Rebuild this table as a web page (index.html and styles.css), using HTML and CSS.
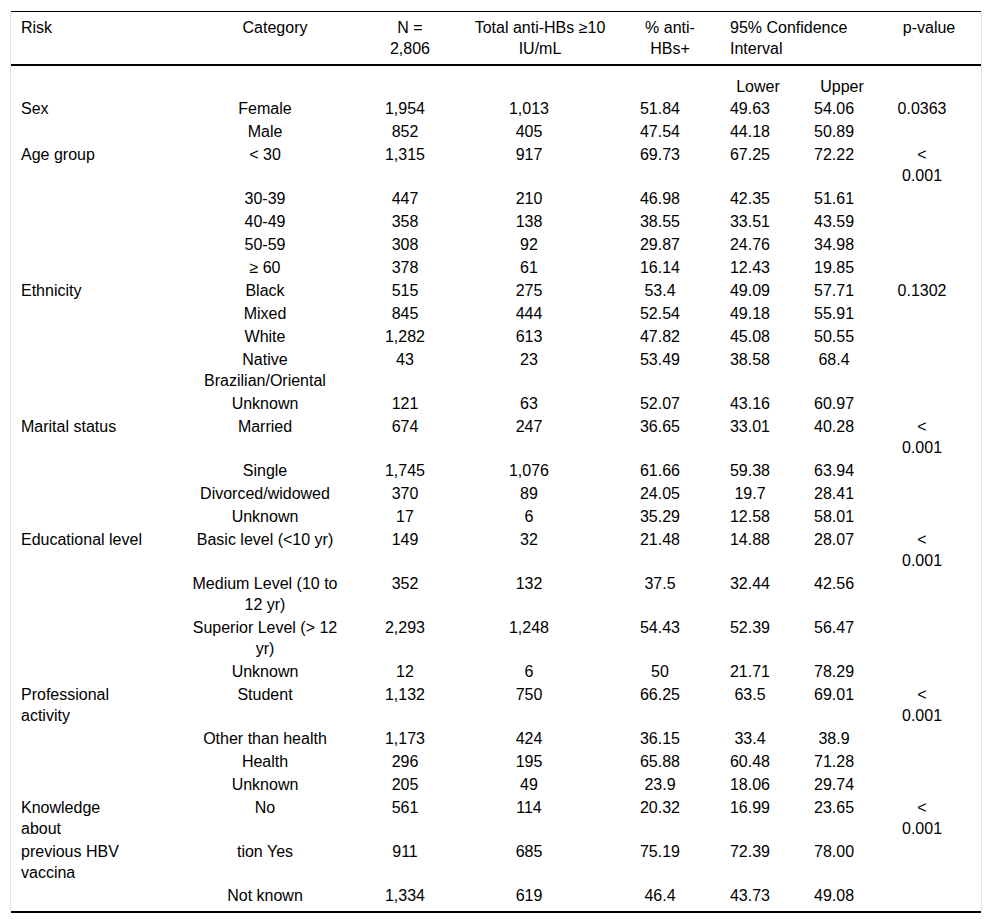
FILE: index.html
```html
<!DOCTYPE html>
<html lang="en">
<head>
<meta charset="utf-8">
<title>Anti-HBs by risk factor</title>
<link rel="stylesheet" href="styles.css">
</head>
<body>
<div class="wrap">
<table class="data">
<colgroup>
<col class="c1"><col class="c2"><col class="c3"><col class="c4"><col class="c5"><col class="c6"><col class="c7"><col class="c8">
</colgroup>
<thead>
<tr>
<th class="h-risk">Risk</th>
<th>Category</th>
<th>N =<br>2,806</th>
<th>Total anti-HBs ≥10<br>IU/mL</th>
<th>% anti-<br>HBs+</th>
<th class="h-ci" colspan="2">95% Confidence<br>Interval</th>
<th class="h-p">p-value</th>
</tr>
</thead>
<tbody>
<tr class="sub"><td></td><td></td><td></td><td></td><td></td><td>Lower</td><td>Upper</td><td></td></tr>
<tr><td>Sex</td><td>Female</td><td>1,954</td><td>1,013</td><td>51.84</td><td>49.63</td><td>54.06</td><td>0.0363</td></tr>
<tr><td></td><td>Male</td><td>852</td><td>405</td><td>47.54</td><td>44.18</td><td>50.89</td><td></td></tr>
<tr><td>Age group</td><td>&lt; 30</td><td>1,315</td><td>917</td><td>69.73</td><td>67.25</td><td>72.22</td><td>&lt;<br>0.001</td></tr>
<tr><td></td><td>30-39</td><td>447</td><td>210</td><td>46.98</td><td>42.35</td><td>51.61</td><td></td></tr>
<tr><td></td><td>40-49</td><td>358</td><td>138</td><td>38.55</td><td>33.51</td><td>43.59</td><td></td></tr>
<tr><td></td><td>50-59</td><td>308</td><td>92</td><td>29.87</td><td>24.76</td><td>34.98</td><td></td></tr>
<tr><td></td><td>≥ 60</td><td>378</td><td>61</td><td>16.14</td><td>12.43</td><td>19.85</td><td></td></tr>
<tr><td>Ethnicity</td><td>Black</td><td>515</td><td>275</td><td>53.4</td><td>49.09</td><td>57.71</td><td>0.1302</td></tr>
<tr><td></td><td>Mixed</td><td>845</td><td>444</td><td>52.54</td><td>49.18</td><td>55.91</td><td></td></tr>
<tr><td></td><td>White</td><td>1,282</td><td>613</td><td>47.82</td><td>45.08</td><td>50.55</td><td></td></tr>
<tr><td></td><td>Native<br>Brazilian/Oriental</td><td>43</td><td>23</td><td>53.49</td><td>38.58</td><td>68.4</td><td></td></tr>
<tr><td></td><td>Unknown</td><td>121</td><td>63</td><td>52.07</td><td>43.16</td><td>60.97</td><td></td></tr>
<tr><td>Marital status</td><td>Married</td><td>674</td><td>247</td><td>36.65</td><td>33.01</td><td>40.28</td><td>&lt;<br>0.001</td></tr>
<tr><td></td><td>Single</td><td>1,745</td><td>1,076</td><td>61.66</td><td>59.38</td><td>63.94</td><td></td></tr>
<tr><td></td><td>Divorced/widowed</td><td>370</td><td>89</td><td>24.05</td><td>19.7</td><td>28.41</td><td></td></tr>
<tr><td></td><td>Unknown</td><td>17</td><td>6</td><td>35.29</td><td>12.58</td><td>58.01</td><td></td></tr>
<tr><td>Educational level</td><td>Basic level (&lt;10 yr)</td><td>149</td><td>32</td><td>21.48</td><td>14.88</td><td>28.07</td><td>&lt;<br>0.001</td></tr>
<tr><td></td><td>Medium Level (10 to<br>12 yr)</td><td>352</td><td>132</td><td>37.5</td><td>32.44</td><td>42.56</td><td></td></tr>
<tr><td></td><td>Superior Level (&gt; 12<br>yr)</td><td>2,293</td><td>1,248</td><td>54.43</td><td>52.39</td><td>56.47</td><td></td></tr>
<tr><td></td><td>Unknown</td><td>12</td><td>6</td><td>50</td><td>21.71</td><td>78.29</td><td></td></tr>
<tr><td>Professional<br>activity</td><td>Student</td><td>1,132</td><td>750</td><td>66.25</td><td>63.5</td><td>69.01</td><td>&lt;<br>0.001</td></tr>
<tr><td></td><td>Other than health</td><td>1,173</td><td>424</td><td>36.15</td><td>33.4</td><td>38.9</td><td></td></tr>
<tr><td></td><td>Health</td><td>296</td><td>195</td><td>65.88</td><td>60.48</td><td>71.28</td><td></td></tr>
<tr><td></td><td>Unknown</td><td>205</td><td>49</td><td>23.9</td><td>18.06</td><td>29.74</td><td></td></tr>
<tr><td>Knowledge<br>about</td><td>No</td><td>561</td><td>114</td><td>20.32</td><td>16.99</td><td>23.65</td><td>&lt;<br>0.001</td></tr>
<tr><td>previous HBV<br>vaccina</td><td>tion Yes</td><td>911</td><td>685</td><td>75.19</td><td>72.39</td><td>78.00</td><td></td></tr>
<tr class="last"><td></td><td>Not known</td><td>1,334</td><td>619</td><td>46.4</td><td>43.73</td><td>49.08</td><td></td></tr>
</tbody>
</table>
</div>
</body>
</html>
```

FILE: styles.css
```css
html, body {
  margin: 0;
  padding: 0;
  background: #fff;
}

body {
  font-family: "Liberation Sans", Arial, sans-serif;
  font-size: 16px;
  line-height: 21px;
  color: #000;
}

.wrap {
  margin: 11px 0 0 10px;
  width: 970px;
  border-left: 1px solid #e6e6e6;
  border-right: 1px solid #e6e6e6;
}

.data {
  width: 970px;
  table-layout: fixed;
  border-collapse: separate;
  border-spacing: 0;
  border-top: 1px solid #000;
  border-bottom: 2px solid #000;
}

.c1 { width: 174px; }
.c2 { width: 180px; }
.c3 { width: 90px; }
.c4 { width: 170px; }
.c5 { width: 90px; }
.c6 { width: 86px; }
.c7 { width: 82px; }
.c8 { width: 98px; }

.data th {
  font-weight: normal;
  text-align: center;
  vertical-align: top;
  white-space: nowrap;
  padding: 5px 0 5px;
  border-bottom: 2px solid #000;
}

.data th.h-risk { text-align: left; padding-left: 10px; }
.data th.h-ci { text-align: left; padding-left: 15px; }
.data th.h-p { padding-right: 6px; }

.data td {
  text-align: center;
  vertical-align: top;
  white-space: nowrap;
  padding: 1px 0 1px;
}

.data td:nth-child(1) { text-align: left; padding-left: 10px; }
.data td:nth-child(2) { padding-right: 20px; }
.data td:nth-child(3) { padding-right: 10px; }
.data td:nth-child(4) { padding-right: 22px; }
.data td:nth-child(5) { padding-right: 20px; }
.data td:nth-child(6) { padding-right: 16px; }
.data td:nth-child(7) { padding-right: 16px; }
.data td:nth-child(8) { padding-right: 20px; }

.data tr.sub td {
  padding-top: 10px;
  padding-bottom: 0;
  padding-right: 0;
}

.data tr.last td {
  padding-bottom: 5px;
}
```
